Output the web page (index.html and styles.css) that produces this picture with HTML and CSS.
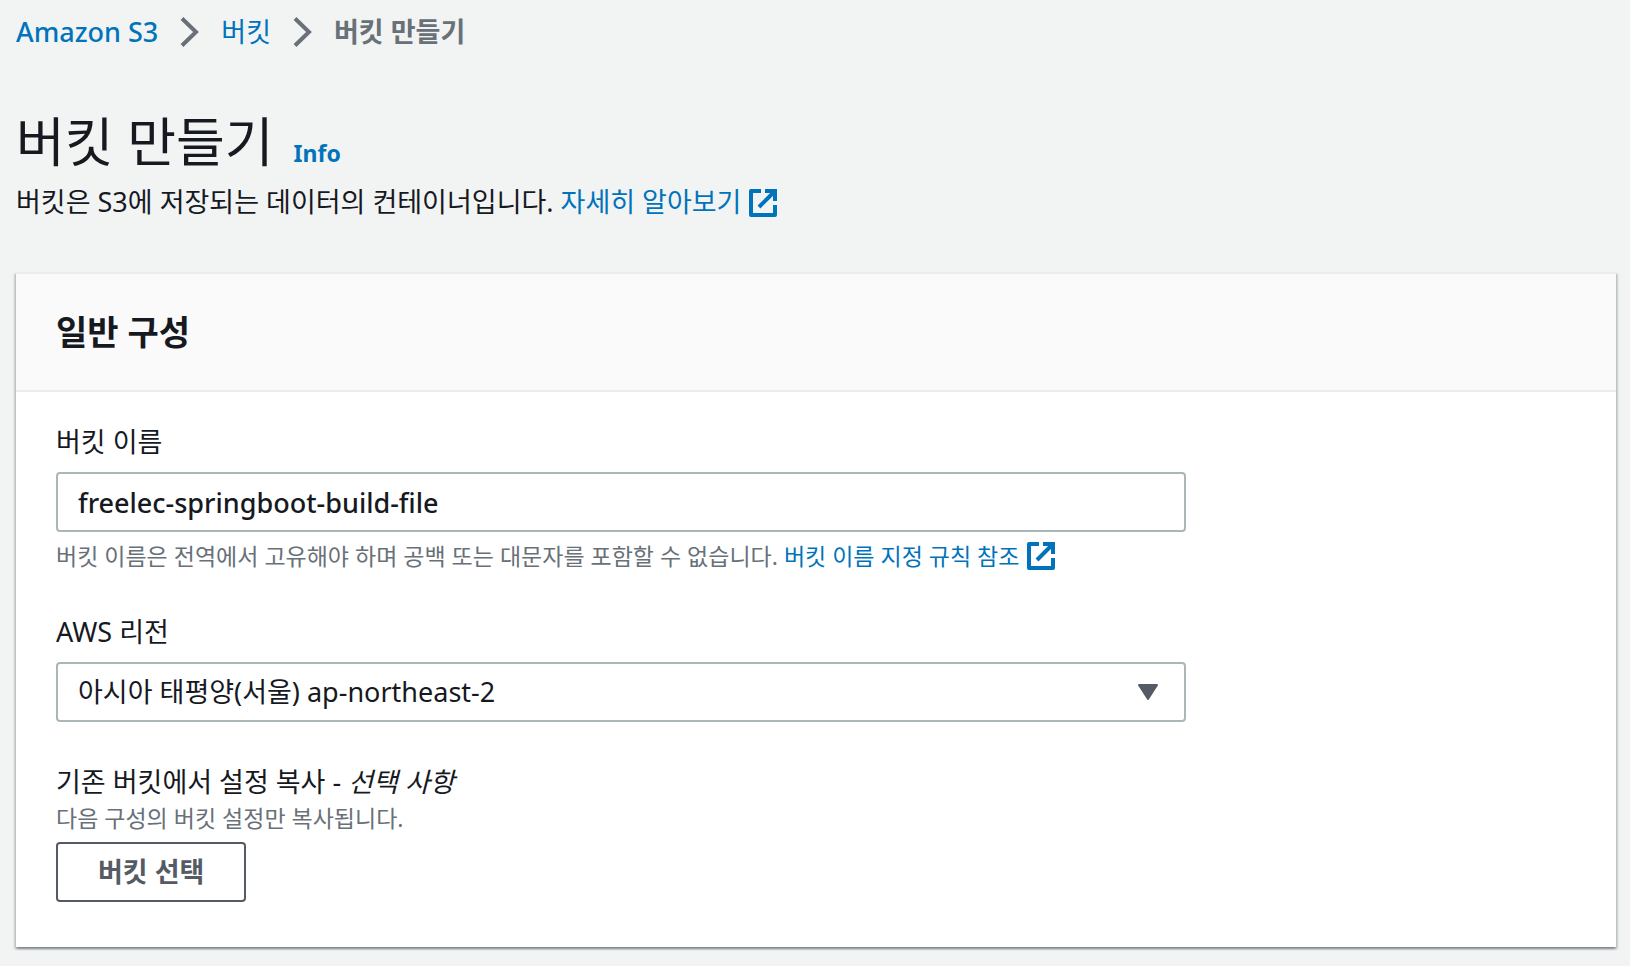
FILE: index.html
```html
<!DOCTYPE html>
<html lang="ko">
<head>
    <meta charset="UTF-8">
    <meta name="viewport" content="width=device-width, initial-scale=1.0">
    <title>버킷 만들기</title>
    <link rel="stylesheet" href="styles.css">
</head>
<body>
    <nav class="breadcrumb">
        <a href="#" class="service">Amazon S3</a>
        <svg class="arrow" viewBox="0 0 20 30"><path d="M2 1.5L16 15L2 28.5"/></svg>
        <a href="#">버킷</a>
        <svg class="arrow" viewBox="0 0 20 30"><path d="M2 1.5L16 15L2 28.5"/></svg>
        <span class="current">버킷 만들기</span>
    </nav>
    <main>
        <div class="page-title">
            <h1>버킷 만들기</h1>
            <a href="#" class="info">Info</a>
        </div>
        <p class="page-desc">버킷은 S3에 저장되는 데이터의 컨테이너입니다.
            <a href="#">자세히 알아보기<svg class="external" viewBox="0 0 28 28"><path d="M12 2H2V26H26V16"/><path d="M16 2H26V12M25 3L10 18"/></svg></a>
        </p>
        <form class="card">
            <div class="card-header">
                <h2>일반 구성</h2>
            </div>
            <div class="card-body">
                <div class="field">
                    <label for="bucketName">버킷 이름</label>
                    <input type="text" id="bucketName" class="control" value="freelec-springboot-build-file" spellcheck="false">
                    <p class="help">버킷 이름은 전역에서 고유해야 하며 공백 또는 대문자를 포함할 수 없습니다.
                        <a href="#">버킷 이름 지정 규칙 참조<svg class="external" viewBox="0 0 28 28"><path d="M12 2H2V26H26V16"/><path d="M16 2H26V12M25 3L10 18"/></svg></a>
                    </p>
                </div>
                <div class="field">
                    <label for="region">AWS 리전</label>
                    <div class="select-box">
                        <select id="region" class="control">
                            <option>아시아 태평양(서울) ap-northeast-2</option>
                        </select>
                        <svg class="caret" viewBox="0 0 20 16"><path d="M1 1H19L10 15Z"/></svg>
                    </div>
                </div>
                <div class="field">
                    <label for="chooseBucket">기존 버킷에서 설정 복사 - <i>선택 사항</i></label>
                    <p class="sub">다음 구성의 버킷 설정만 복사됩니다.</p>
                    <button type="button" id="chooseBucket" class="btn">버킷 선택</button>
                </div>
            </div>
        </form>
    </main>
</body>
</html>
```

FILE: styles.css
```css
*{
    box-sizing: border-box;
}
body{
    margin: 0;
    padding: 10px 14px 18px 16px;
    background: #f2f3f3;
    color: #16191f;
    font-family: "Noto Sans", "Noto Sans CJK KR", sans-serif;
    font-size: 27px;
    font-weight: 400;
    line-height: 36px;
}
h1,
h2,
p{
    margin: 0;
}
a{
    color: #0073bb;
    text-decoration: none;
}
svg{
    fill: none;
    stroke: currentColor;
}
/* 상단 경로 */
.breadcrumb{
    display: flex;
    align-items: center;
    height: 44px;
}
.service{
    font-weight: 500;
}
.arrow{
    width: 20px;
    height: 30px;
    margin: 0 21px 0 22px;
    color: #687078;
    stroke-width: 4;
}
.current{
    color: #687078;
    font-weight: 700;
}
/* 제목 */
.page-title{
    display: flex;
    align-items: baseline;
    gap: 20px;
    margin-top: 52px;
}
h1{
    font-size: 53px;
    font-weight: 400;
    line-height: 72px;
}
.info{
    font-size: 23px;
    font-weight: 700;
}
.page-desc{
    margin-top: 6px;
}
.external{
    width: 28px;
    height: 28px;
    margin-left: 8px;
    vertical-align: -5px;
    stroke-width: 4;
}
.external path:first-child{
    stroke-linejoin: round;
}
/* 일반 구성 */
.card{
    margin-top: 52px;
    background: #ffffff;
    border-top: 2px solid #eaeded;
    box-shadow: 0 2px 2px 0 rgba(0,28,36,.3), 2px 2px 2px 0 rgba(0,28,36,.15), -2px 2px 2px 0 rgba(0,28,36,.15);
}
.card-header{
    padding: 36px 40px;
    background: #fafafa;
    border-bottom: 2px solid #eaeded;
}
h2{
    font-size: 34px;
    font-weight: 700;
    line-height: 44px;
}
.card-body{
    display: flex;
    flex-direction: column;
    gap: 42px;
    padding: 32px 40px 45px 40px;
}
.field label{
    display: block;
    margin-bottom: 12px;
}
.control{
    display: block;
    width: 100%;
    height: 60px;
    padding: 0 20px;
    background: #ffffff;
    border: 2px solid #aab7b8;
    border-radius: 4px;
    color: #16191f;
    font: inherit;
    appearance: none;
}
input.control{
    font-weight: 500;
}
input.control,
.select-box{
    max-width: 1130px;
}
.select-box{
    position: relative;
}
.caret{
    position: absolute;
    top: 22px;
    right: 28px;
    width: 20px;
    height: 16px;
    color: #545b64;
    fill: currentColor;
    stroke-width: 2;
    stroke-linejoin: round;
    pointer-events: none;
}
.help,
.sub{
    color: #687078;
    font-size: 23px;
    line-height: 32px;
}
.help{
    margin-top: 8px;
}
.sub{
    margin: -10px 0 8px 0;
}
.btn{
    height: 60px;
    padding: 0 40px;
    background: #ffffff;
    border: 2px solid #545b64;
    border-radius: 4px;
    color: #545b64;
    font: inherit;
    font-weight: 700;
}
```
